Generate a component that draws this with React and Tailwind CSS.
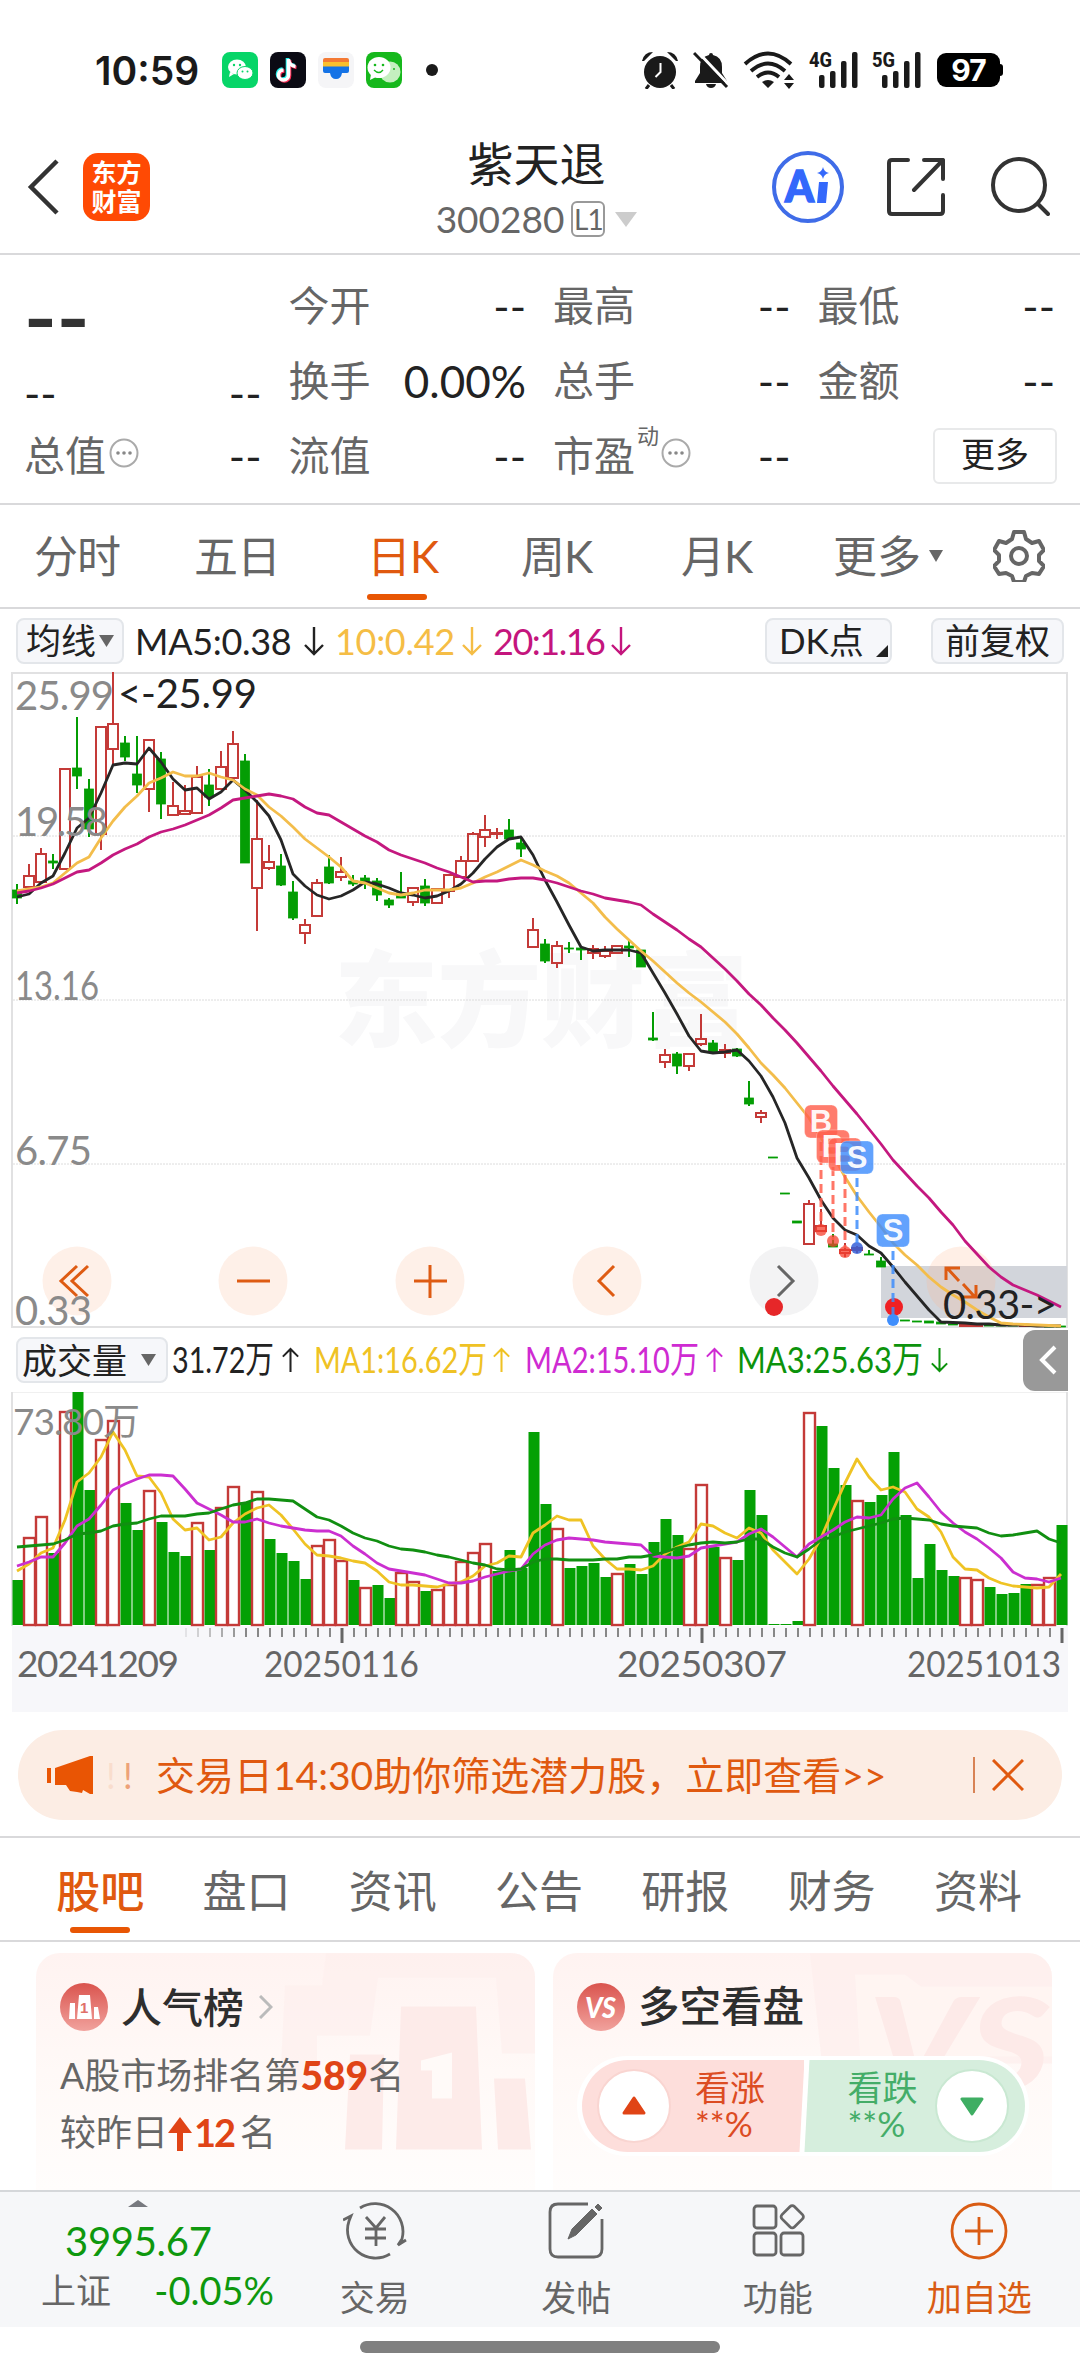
import clsx from 'clsx';

// [type, high, bodyTop, bodyBottom, low] in chart units, r = rise, g = fall
const candles = [
  ['g', 884, 890, 898, 904], ['r', 864, 876, 887, 887], ['r', 848, 854, 882, 882], ['g', 854, 861, 863, 869],
  ['r', 769, 769, 869, 869], ['g', 717, 768, 776, 789], ['g', 779, 789, 829, 837], ['r', 727, 727, 834, 850],
  ['r', 672, 724, 749, 765], ['g', 736, 743, 757, 761], ['g', 736, 774, 785, 793], ['r', 740, 740, 789, 812],
  ['g', 752, 759, 804, 819], ['r', 782, 806, 815, 815], ['r', 785, 811, 814, 814], ['r', 766, 777, 813, 813],
  ['g', 769, 785, 797, 806], ['r', 751, 767, 789, 789], ['r', 731, 744, 778, 778], ['g', 754, 761, 863, 863],
  ['r', 800, 839, 888, 931], ['r', 845, 862, 868, 870], ['g', 854, 866, 885, 886], ['g', 881, 892, 918, 920],
  ['r', 919, 925, 933, 944], ['r', 879, 883, 916, 916], ['g', 855, 867, 883, 884], ['r', 857, 872, 877, 881],
  ['g', 875, 881, 884, 886], ['g', 875, 878, 883, 889], ['g', 878, 881, 895, 901], ['g', 898, 900, 905, 908],
  ['g', 872, 893, 898, 898], ['r', 888, 888, 902, 906], ['g', 879, 886, 903, 906], ['r', 889, 889, 903, 903],
  ['r', 875, 875, 891, 898], ['r', 856, 861, 877, 877], ['r', 832, 834, 861, 861], ['r', 815, 830, 837, 847],
  ['r', 828, 833, 834, 839], ['g', 819, 830, 839, 839], ['g', 838, 843, 849, 857], ['r', 918, 930, 947, 947],
  ['g', 939, 944, 961, 963], ['r', 941, 946, 963, 968], ['g', 942, 948, 949, 953], ['g', 948, 948, 950, 960],
  ['r', 945, 949, 953, 959], ['r', 946, 951, 956, 958], ['r', 945, 946, 953, 953], ['g', 941, 946, 948, 957],
  ['g', 950, 950, 967, 967], ['g', 1012, 1038, 1040, 1041], ['r', 1049, 1055, 1062, 1068], ['g', 1052, 1054, 1066, 1074],
  ['r', 1054, 1054, 1066, 1071], ['r', 1014, 1039, 1044, 1046], ['g', 1040, 1043, 1052, 1052], ['r', 1044, 1050, 1053, 1058],
  ['g', 1048, 1049, 1056, 1057], ['g', 1081, 1098, 1104, 1106], ['r', 1110, 1113, 1117, 1123], ['g', 1157, 1157, 1158, 1158],
  ['g', 1193, 1193, 1194, 1194], ['g', 1221, 1221, 1223, 1223], ['r', 1200, 1204, 1244, 1244], ['r', 1209, 1226, 1231, 1231],
  ['g', 1234, 1244, 1247, 1247], ['r', 1243, 1250, 1253, 1257], ['r', 1246, 1248, 1250, 1253], ['g', 1250, 1254, 1255, 1255],
  ['g', 1257, 1261, 1267, 1267], ['g', 1319, 1319, 1320, 1320], ['g', 1320, 1320, 1321, 1321], ['g', 1321, 1321, 1322, 1322],
  ['g', 1321, 1321, 1323, 1323], ['g', 1322, 1322, 1324, 1324], ['g', 1324, 1324, 1325, 1325], ['r', 1324, 1324, 1326, 1326],
  ['r', 1325, 1325, 1326, 1326], ['g', 1325, 1325, 1326, 1326], ['g', 1325, 1325, 1326, 1326], ['g', 1325, 1325, 1326, 1326],
  ['r', 1325, 1325, 1326, 1326], ['r', 1325, 1325, 1326, 1326], ['g', 1326, 1326, 1327, 1327], ['g', 1326, 1326, 1327, 1327],
];

const ma5 = [
  897, 894, 883, 876, 853, 828, 818, 793, 765, 763, 764, 748, 762, 779, 790, 788, 799, 792, 780, 790, 802, 816,
  840, 874, 886, 895, 899, 896, 890, 882, 884, 888, 893, 895, 898, 896, 891, 884, 873, 859, 847, 839, 837, 855,
  880, 902, 925, 947, 951, 950, 950, 950, 953, 973, 993, 1014, 1036, 1051, 1053, 1052, 1050, 1061, 1076, 1097, 1123, 1158,
  1178, 1200, 1218, 1230, 1235, 1246, 1253, 1267, 1282, 1296, 1310, 1322, 1322.5, 1323, 1324, 1324, 1325, 1325, 1325, 1326, 1326, 1326,
];
const ma10 = [
  891, 889, 887, 883, 873, 863, 857, 838, 821, 807, 796, 783, 778, 772, 776, 776, 773, 777, 780, 789, 795, 807,
  816, 827, 839, 848, 857, 867, 881, 883, 888, 893, 895, 893, 890, 890, 890, 888, 883, 877, 872, 866, 860, 865,
  871, 876, 883, 893, 903, 917, 929, 940, 951, 961, 972, 983, 993, 1002, 1012, 1022, 1034, 1048, 1063, 1075, 1088, 1103,
  1118, 1138, 1155, 1177, 1196, 1212, 1227, 1243, 1255, 1265, 1277, 1287, 1295, 1302, 1310, 1317, 1323, 1324, 1324.5, 1325, 1325.5, 1326,
];
const ma20 = [
  893, 891, 888, 884, 878, 872, 870, 863, 855, 849, 844, 837, 832, 829, 825, 820, 815, 808, 800, 798, 796, 794,
  796, 799, 807, 813, 815, 822, 829, 836, 842, 850, 855, 859, 863, 868, 872, 877, 882, 881, 881, 879, 878, 878,
  880, 883, 887, 891, 894, 898, 900, 902, 905, 914, 922, 930, 939, 947, 958, 969, 981, 994, 1005, 1018, 1030, 1043,
  1057, 1071, 1086, 1100, 1114, 1129, 1144, 1160, 1173, 1186, 1198, 1212, 1225, 1241, 1254, 1267, 1277, 1285, 1290, 1295, 1301, 1307,
];

const volumes = [
  1580, 1537, 1516, 1553, 1411, 1391, 1490, 1439, 1420, 1503, 1530, 1490, 1522, 1552, 1556, 1522, 1550, 1507, 1486, 1502, 1491, 1539,
  1553, 1561, 1579, 1545, 1539, 1560, 1580, 1587, 1585, 1598, 1572, 1581, 1591, 1589, 1584, 1561, 1552, 1543, 1571, 1550, 1568, 1432,
  1504, 1528, 1568, 1566, 1563, 1577, 1573, 1564, 1574, 1542, 1519, 1535, 1548, 1484, 1547, 1557, 1560, 1490, 1515, 1624, 1624, 1621,
  1412, 1426, 1468, 1485, 1500, 1502, 1495, 1452, 1515, 1578, 1544, 1570, 1576, 1577, 1579, 1587, 1594, 1593, 1584, 1584, 1577, 1525,
];
const risingVolumes = [1, 2, 4, 7, 8, 11, 15, 17, 18, 20, 25, 26, 27, 29, 32, 33, 35, 36, 37, 38, 39, 45, 50, 56, 57, 59, 66, 70, 79, 80, 85, 86];

const vma1 = [
  1571, 1564, 1553, 1548, 1520, 1482, 1473, 1457, 1432, 1450, 1476, 1477, 1493, 1519, 1530, 1528, 1540, 1537, 1523, 1514, 1508, 1505,
  1515, 1529, 1544, 1555, 1556, 1558, 1561, 1563, 1571, 1582, 1585, 1585, 1586, 1587, 1584, 1582, 1576, 1566, 1563, 1556, 1557, 1533,
  1525, 1516, 1520, 1520, 1546, 1559, 1569, 1569, 1570, 1566, 1554, 1547, 1542, 1524, 1526, 1533, 1538, 1528, 1533, 1550, 1562, 1574,
  1559, 1538, 1510, 1483, 1459, 1477, 1490, 1487, 1492, 1509, 1517, 1532, 1557, 1569, 1570, 1578, 1583, 1586, 1587, 1588, 1587, 1574,
];
const vma2 = [
  1566, 1562, 1557, 1557, 1543, 1526, 1519, 1505, 1490, 1484, 1479, 1475, 1475, 1476, 1489, 1503, 1509, 1515, 1522, 1522, 1519, 1523,
  1526, 1528, 1530, 1531, 1531, 1536, 1546, 1554, 1563, 1569, 1571, 1573, 1575, 1579, 1583, 1583, 1581, 1577, 1574, 1571, 1569, 1554,
  1545, 1540, 1538, 1539, 1540, 1542, 1543, 1544, 1545, 1556, 1557, 1558, 1556, 1548, 1546, 1544, 1542, 1534, 1529, 1537, 1547, 1557,
  1544, 1537, 1530, 1522, 1517, 1518, 1515, 1499, 1488, 1483, 1497, 1512, 1523, 1532, 1539, 1548, 1558, 1572, 1578, 1579, 1582, 1578,
];
const vma3 = [
  1547, 1546, 1545, 1544, 1540, 1534, 1533, 1531, 1526, 1524, 1523, 1519, 1516, 1516, 1516, 1514, 1513, 1509, 1505, 1503, 1499, 1499,
  1500, 1501, 1509, 1517, 1520, 1526, 1533, 1538, 1541, 1546, 1549, 1550, 1552, 1555, 1557, 1560, 1563, 1565, 1569, 1570, 1569, 1562,
  1559, 1559, 1560, 1560, 1560, 1559, 1559, 1557, 1557, 1555, 1552, 1548, 1545, 1543, 1542, 1543, 1542, 1539, 1539, 1547, 1553, 1557,
  1549, 1540, 1537, 1532, 1529, 1526, 1523, 1519, 1518, 1519, 1520, 1524, 1526, 1527, 1528, 1533, 1536, 1535, 1533, 1531, 1539, 1543,
];

const xAt = (i) => 17 + i * 12;
const toPoints = (values) => values.map((y, i) => `${xAt(i)},${y}`).join(' ');

const signals = [
  { label: 'B', x: 821, y: 1105, end: 1226, color: '#ff5f4d' },
  { label: 'B', x: 833, y: 1130, end: 1240, color: '#ff5f4d' },
  { label: 'B', x: 845, y: 1138, end: 1248, color: '#ff5f4d' },
  { label: 'S', x: 857, y: 1141, end: 1246, color: '#3f8efc' },
  { label: 'S', x: 893, y: 1214, end: 1316, color: '#3f8efc' },
];

const Line = ({ values, color, width = 2.8 }) => (
  <polyline points={toPoints(values)} fill="none" stroke={color} strokeWidth={width} strokeLinejoin="round" />
);

const Down = ({ className }) => (
  <svg viewBox="0 0 14 12" className={className} fill="currentColor" preserveAspectRatio="none">
    <path d="M0 0h14L7 12z" />
  </svg>
);

const Arrow = ({ up, className }) => (
  <svg viewBox="0 0 20 30" className={clsx('h-[30px] w-5 shrink-0', up && 'rotate-180', className)} fill="none" stroke="currentColor" strokeWidth="2.4">
    <path d="M10 1v27M1 19l9 9 9-9" />
  </svg>
);

const StatusBar = () => (
  <div className="flex h-[140px] items-center pl-[95px] text-[#1a1a1a]">
    <div className="w-[127px] font-['Inter'] text-[39px] leading-none font-semibold">10:59</div>
    <svg viewBox="0 0 36 36" className="mr-3 size-9">
      <rect width="36" height="36" rx="8" fill="#07d568" />
      <ellipse cx="15" cy="15" rx="9" ry="7.5" fill="#fff" />
      <path d="M8 20l-1 5 5-3z" fill="#fff" />
      <ellipse cx="23" cy="21" rx="8" ry="6.5" fill="#fff" stroke="#07d568" />
      <g fill="#07d568"><circle cx="12" cy="13" r="1.2" /><circle cx="18" cy="13" r="1.2" /><circle cx="20.5" cy="19.5" r="1" /><circle cx="25.5" cy="19.5" r="1" /></g>
    </svg>
    <svg viewBox="0 0 36 36" className="mr-3 size-9" fill="none" strokeWidth="3.6">
      <rect width="36" height="36" rx="8" fill="#0b0b14" />
      <path d="M18.500 7v16a5 5 0 1 1-5-5M18.500 7c0 4 3 7 7 7.500" stroke="#25f4ee" transform="translate(-1 -1)" />
      <path d="M18.500 7v16a5 5 0 1 1-5-5M18.500 7c0 4 3 7 7 7.500" stroke="#fe2c55" transform="translate(1 1)" />
      <path d="M18.500 7v16a5 5 0 1 1-5-5M18.500 7c0 4 3 7 7 7.500" stroke="#fff" />
    </svg>
    <svg viewBox="0 0 36 36" className="mr-3 size-9">
      <rect width="36" height="36" rx="8" fill="#f5f5f7" />
      <path d="M5 8q0-2 2-2h22q2 0 2 2v3H5z" fill="#f47a35" />
      <path d="M5 10h26v5H5z" fill="#fbc02d" />
      <path d="M5 14.500h26V19q0 2-2 2h-5q-1 6-6 6t-6-6H7q-2 0-2-2z" fill="#1573e6" />
    </svg>
    <svg viewBox="0 0 36 36" className="size-9">
      <rect width="36" height="36" rx="8" fill="#16b81c" />
      <circle cx="24" cy="20" r="10.500" fill="#c4efbf" />
      <ellipse cx="13" cy="15.500" rx="11.500" ry="10.500" fill="#fff" />
      <path d="M5 22l-1 6 6-3z" fill="#fff" />
      <g fill="#16b81c"><circle cx="9" cy="13" r="1.300" /><circle cx="17" cy="13" r="1.300" /><circle cx="28" cy="17" r="1" /></g>
      <path d="M8 18q5 5 9 0" fill="none" stroke="#16b81c" strokeWidth="1.300" />
    </svg>
    <div className="ml-6 size-3 rounded-full bg-[#1a1a1a]" />

    <svg viewBox="0 0 38 38" className="ml-[203px] h-[38px] w-[38px]" fill="#1a1a1a">
      <circle cx="19" cy="21" r="16" />
      <path d="M1 10Q3 1 12 1L3 10zM37 10Q35 1 26 1l9 9z" />
      <path d="M8 34l-3 4M30 34l3 4" stroke="#1a1a1a" strokeWidth="3" />
      <path d="M19.500 12v9l-5 5" fill="none" stroke="#fff" strokeWidth="2" />
    </svg>
    <svg viewBox="0 0 36 38" className="ml-[14px] h-[38px] w-9" fill="#1a1a1a">
      <path d="M18 2q2 0 2 2 9 2 9 12v6l5 8v2H2v-2l5-8v-6Q7 6 16 4q0-2 2-2z" />
      <path d="M13 33h10q-1 4-5 4t-5-4z" />
      <path d="M4 0l33 35" stroke="#fff" strokeWidth="3" />
      <path d="M1 2l33 34" stroke="#1a1a1a" strokeWidth="3" />
    </svg>
    <svg viewBox="0 0 52 38" className="ml-[14px] h-[38px] w-[52px]" fill="none" stroke="#1a1a1a" strokeWidth="3.800">
      <path d="M2 13q23-21 46 0M8 20q17-15 34 0M14 26q11-9 22 0" />
      <path d="M19 31q6-4 12 0l-6 6zM41 29l5-6 5 6zM41 32l5 6 5-6z" fill="#1a1a1a" stroke="none" />
    </svg>
    {['4G', '5G'].map((net) => (
      <svg key={net} viewBox="0 0 49 38" className="ml-[14px] h-[38px] w-[49px] overflow-visible" fill="#1a1a1a">
        <text x="0" y="16" fontSize="21" fontWeight="800" fontFamily="Roboto" textLength="23" lengthAdjust="spacingAndGlyphs">{net}</text>
        <rect x="10" y="24" width="5.500" height="13" rx="2" />
        <rect x="21" y="20" width="5.500" height="17" rx="2" />
        <rect x="32" y="10" width="5.500" height="27" rx="2" />
        <rect x="43" y="1" width="5.500" height="36" rx="2" />
      </svg>
    ))}
    <div className="ml-4 flex h-[34px] w-[63px] items-center justify-center rounded-[9px] bg-black font-['Inter'] text-[30px] leading-none font-bold tracking-[-1px] text-white">97</div>
    <div className="h-3 w-[3px] rounded-r-sm bg-black" />
  </div>
);

const Header = () => (
  <header className="flex h-[115px] items-center border-b-2 border-[#d9d9db] pb-[19px] text-[#333]">
    <svg viewBox="0 0 32 56" className="ml-[27px] h-14 w-8" fill="none" stroke="currentColor" strokeWidth="4.500">
      <path d="M30 2L4 28l26 26" />
    </svg>
    <div className="ml-[24px] flex h-[68px] w-[67px] flex-col items-center justify-center rounded-[15px] bg-[#ff4a04] text-[25px] leading-[29px] font-bold text-white">
      <span>东方</span>
      <span>财富</span>
    </div>
    <div className="ml-[286px] flex w-[201px] flex-col items-center pt-[3px]">
      <div className="text-[46px] leading-[52px] text-[#222]">紫天退</div>
      <div className="mt-[9px] flex items-center text-[#666]">
        <span className="text-[37px] leading-[40px]">300280</span>
        <span className="ml-[7px] flex h-[36px] w-[34px] items-center justify-center rounded-[6px] border-2 border-[#999] text-[28px] leading-none tracking-[-1px]">L1</span>
        <Down className="ml-[10px] h-[15px] w-[22px] text-[#ccc]" />
      </div>
    </div>
    <svg viewBox="0 0 72 72" className="ml-[135px] size-[72px]">
      <circle cx="36" cy="36" r="34" fill="none" stroke="#3f6ce8" strokeWidth="4" />
      <text x="13" y="51" fontSize="43" fontWeight="900" fontFamily="Lato" fill="#3468fb" stroke="#3468fb" strokeWidth="1.500" textLength="29" lengthAdjust="spacingAndGlyphs">A</text>
      <path d="M47 31h9l-2 21h-9zM51 16q1 5 6 6-5 1-6 6-1-5-6-6 5-1 6-6z" fill="#3468fb" />
    </svg>
    <svg viewBox="0 0 58 58" className="ml-[43px] size-[58px]" fill="none" stroke="currentColor" strokeWidth="4" strokeLinecap="round" strokeLinejoin="round">
      <path d="M21 2H5q-3 0-3 3v48q0 3 3 3h48q3 0 3-3V37M37 2h19v19M56 2L27 32" />
    </svg>
    <svg viewBox="0 0 60 60" className="ml-[45px] size-[60px]" fill="none" stroke="currentColor" strokeWidth="4" strokeLinecap="round">
      <circle cx="29" cy="28" r="26" />
      <path d="M48 47l10 10" />
    </svg>
  </header>
);

const Info = () => (
  <svg viewBox="0 0 30 30" className="mb-[6px] ml-[3px] size-[30px]" fill="none" stroke="#aaa" strokeWidth="2">
    <circle cx="15" cy="15" r="13.500" />
    <g fill="#888" stroke="none"><circle cx="9" cy="15" r="1.800" /><circle cx="15" cy="15" r="1.800" /><circle cx="21" cy="15" r="1.800" /></g>
  </svg>
);

const Quote = ({ label, value = '--', extra }) => (
  <div className="flex items-center justify-between leading-none">
    <span className="flex items-center text-[41px] text-[#666]">{label}{extra}</span>
    <span className="text-[44px] text-[#222]">{value}</span>
  </div>
);

const Quotes = () => (
  <section className="grid h-[250px] grid-cols-4 grid-rows-[75px_75px_75px] gap-x-[27px] border-b-2 border-[#d9d9db] pt-[13px] pr-[25px] pl-[24px]">
    <div className="flex items-center pt-[22px]">
      <span className="origin-left scale-x-[1.22] text-[72px] leading-none font-black text-[#333]">--</span>
    </div>
    <Quote label="今开" />
    <Quote label="最高" />
    <Quote label="最低" />
    <div className="flex items-center justify-between pt-6 text-[44px] leading-none text-[#222]">
      <span>--</span>
      <span>--</span>
    </div>
    <Quote label="换手" value="0.00%" />
    <Quote label="总手" />
    <Quote label="金额" />
    <Quote label="总值" extra={<Info />} />
    <Quote label="流值" />
    <Quote label="市盈" extra={<><span className="mb-10 -mr-px ml-[2px] text-[22px]">动</span><Info /></>} />
    <div className="flex items-center justify-end">
      <button className="-mr-[2px] h-[56px] w-[124px] rounded-md border-2 border-[#e8e9ea] pb-1 text-[34px] leading-none text-[#222]">更多</button>
    </div>
  </section>
);

const periods = [
  { label: '分时', cls: 'w-[160px] pl-[34px]' },
  { label: '五日', cls: 'w-[207px] pl-[34px]' },
  { label: '日K', cls: 'w-[154px] text-[#e0590f]', active: true },
  { label: '周K', cls: 'w-[160px]' },
  { label: '月K', cls: 'w-[152px]' },
];

const PeriodTabs = () => (
  <nav className="flex h-[104px] items-center border-b-2 border-[#d9d9db] text-[44px] leading-none text-[#666]">
    {periods.map((p) => (
      <div key={p.label} className={clsx('relative flex h-full items-center tracking-[-1px]', p.cls)}>
        {p.label}
        {p.active && <span className="absolute bottom-[7px] left-0 h-[6px] w-[60px] rounded-full bg-[#e85604]" />}
      </div>
    ))}
    <div>更多</div>
    <Down className="ml-2 h-3 w-[14px]" />
    <svg viewBox="0 0 52 52" className="ml-[50px] size-[52px]" fill="none" stroke="currentColor" strokeWidth="4" strokeLinejoin="round">
      <path d="M21 2h10l2 7 6 4 7-2 5 9-5 5v6l5 5-5 8-7-1-6 3-2 6H21l-2-6-6-3-7 1-5-8 5-5v-6l-5-5 5-9 7 2 6-4z" />
      <circle cx="26" cy="26" r="8" />
    </svg>
  </nav>
);

const pill = 'flex items-center rounded-lg border-2 border-[#e3e6ea] bg-[#f6f7fa] text-[35px] leading-none text-[#222]';

const MaLegend = () => (
  <div className="flex h-[63px] items-center text-[36px] leading-none text-[#222]">
    <div className={clsx(pill, 'ml-4 h-[46px] w-[108px] pl-[8px]')}>均线<Down className="ml-[3px] h-3 w-[15px] text-[#666]" /></div>
    <span className="ml-[11px] w-[169px] tracking-[-0.3px]">MA5:0.38</span>
    <Arrow />
    <span className="ml-[11px] w-[127px] tracking-[-0.3px] text-[#f5bd45]">10:0.42</span>
    <Arrow className="text-[#f5bd45]" />
    <span className="ml-[11px] w-[118px] tracking-[-1.5px] text-[#c4157d]">20:1.16</span>
    <Arrow className="text-[#c4157d]" />
    <div className={clsx(pill, 'ml-auto h-[46px] w-[127px] pl-3')}>
      DK点
      <svg viewBox="0 0 12 12" className="mt-5 ml-3 size-3"><path d="M12 0v12H0z" fill="#222" /></svg>
    </div>
    <div className={clsx(pill, 'mr-4 ml-[39px] h-[46px] w-[133px] justify-center')}>前复权</div>
  </div>
);

const ControlIcon = ({ x, d, color = '#de5b12', bg = '#feede4' }) => (
  <g>
    <circle cx={x} cy="1281" r="34.500" fill={bg} fillOpacity="0.85" />
    <path d={d} transform={`translate(${x} 1281)`} fill="none" stroke={color} strokeWidth="3" />
  </g>
);

const Candle = ({ data, i }) => {
  const [type, high, top, bottom, low] = data;
  const x = xAt(i);
  const color = type === 'r' ? '#c43a38' : '#049d04';
  const height = Math.max(bottom - top, 1);
  return (
    <g stroke={color} strokeWidth="2">
      <path d={`M${x} ${high}V${top}M${x} ${bottom}V${low}`} />
      {type === 'r'
        ? <rect x={x - 5} y={top} width="10" height={height} fill="none" />
        : <rect x={x - 4.5} y={top} width="9" height={height} fill={color} strokeWidth="0.800" />}
    </g>
  );
};

const PriceChart = () => (
  <svg viewBox="0 672 1080 656" className="block h-[656px] w-[1080px]">
    <text x="334" y="1039" fontSize="104" fontWeight="900" fill="#f8f8f9" textLength="414">东方财富</text>
    <rect x="12" y="673" width="1055" height="654" fill="none" stroke="#e1e1e2" strokeWidth="2" />
    {[836, 1000, 1164].map((y) => (
      <path key={y} d={`M13 ${y}H1066`} stroke="#dcdcdc" strokeWidth="1" strokeDasharray="2 1" />
    ))}
    <rect x="881" y="1266" width="186" height="52" fill="#d2d5db" />

    <ControlIcon x={77} d="M0-15L-16 0 0 15M11-15L-5 0 11 15" />
    <ControlIcon x={253} d="M-16 0H17" />
    <ControlIcon x={430} d="M-16 0H17M0-16V17" />
    <ControlIcon x={607} d="M7-15L-8 0 7 15" />
    <ControlIcon x={784} d="M-6-15L9 0-6 15" color="#666" bg="#f1f1f2" />
    <circle cx="961" cy="1281" r="34.500" fill="#ffb58d" fillOpacity="0.220" />
    <path d="M946 1280v-12h14M948 1269l11 12M976 1285v12h-14M974 1296l-11-12" fill="none" stroke="#de5b12" strokeWidth="3" />

    {candles.map((data, i) => <Candle key={i} data={data} i={i} />)}
    <Line values={ma5} color="#262626" />
    <Line values={ma10} color="#f3bd4b" />
    <Line values={ma20} color="#c4187f" />

    <circle cx="774" cy="1307" r="9" fill="#e62729" />
    <circle cx="894" cy="1307" r="9" fill="#f02024" />
    <g fill="#f5402f" fillOpacity="0.750">
      <circle cx="821" cy="1230" r="6" />
      <circle cx="833" cy="1241" r="6" />
      <circle cx="845" cy="1252" r="6" />
    </g>
    <circle cx="857" cy="1248" r="6" fill="#3560d8" fillOpacity="0.850" />
    <circle cx="893" cy="1320" r="6" fill="#3f8efc" />
    {signals.map((s) => (
      <g key={s.x}>
        <path d={`M${s.x} ${s.y + 37}V${s.end}`} stroke={s.color} strokeWidth="3" strokeDasharray="9 5" opacity="0.850" />
        <rect x={s.x - 16.5} y={s.y} width="33" height="33" rx="6" fill={s.color} fillOpacity="0.820" stroke="#fff" strokeOpacity="0.300" />
        <text x={s.x} y={s.y + 27} textAnchor="middle" fontSize="31" fontWeight="700" fontFamily="Liberation Sans" fill="#fff" fillOpacity="0.950">{s.label}</text>
      </g>
    ))}

    <g fontSize="40" fill="#8a8a8a">
      <text x="15" y="710" textLength="99">25.99</text>
      <text x="15" y="836" textLength="93">19.58</text>
      <text x="15" y="1000" textLength="84" lengthAdjust="spacingAndGlyphs">13.16</text>
      <text x="15" y="1165" textLength="77">6.75</text>
      <text x="15" y="1325" textLength="77">0.33</text>
    </g>
    <g fontSize="40" fill="#222">
      <text x="118" y="708" textLength="139">&lt;-25.99</text>
      <text x="943" y="1319" textLength="114">0.33-&gt;</text>
    </g>
  </svg>
);

const volumeLegend = [
  { text: '31.72万', box: 'w-[110px]', length: 102, up: true, cls: 'mr-[15px] text-[#222]' },
  { text: 'MA1:16.62万', box: 'w-[179px]', length: 173, up: true, cls: 'mr-[15px] text-[#efc224]' },
  { text: 'MA2:15.10万', box: 'w-[181px]', length: 174, up: true, cls: 'mr-[14px] text-[#cf2bd2]' },
  { text: 'MA3:25.63万', box: 'w-[194px]', length: 186, up: false, cls: 'text-[#0c930c]' },
];

const VolumeLegend = () => (
  <div className="flex h-[64px] items-center text-[36px] leading-none">
    <div className={clsx(pill, 'ml-4 h-[46px] w-[152px] shrink-0 pl-[4px]')}>成交量<Down className="ml-[14px] h-3 w-[15px] text-[#666]" /></div>
    <div className="ml-[4px] flex items-center">
      {volumeLegend.map((item) => (
        <div key={item.text} className={clsx('flex items-center', item.cls)}>
          <svg className={clsx('h-[46px] shrink-0 overflow-visible', item.box)}>
            <text x="0" y="36" fontSize="37" fill="currentColor" textLength={item.length} lengthAdjust="spacingAndGlyphs">{item.text}</text>
          </svg>
          <Arrow up={item.up} className="w-[17px]" />
        </div>
      ))}
    </div>
    <div className="mr-3 ml-auto flex h-[61px] w-[45px] shrink-0 items-center justify-center rounded-l-xl bg-[#999]">
      <svg viewBox="0 0 18 30" className="ml-1 h-[30px] w-[18px]" fill="none" stroke="#fff" strokeWidth="4"><path d="M16 2L3 15l13 13" /></svg>
    </div>
  </div>
);

const VolumeChart = () => (
  <svg viewBox="0 1392 1080 320" className="block h-[320px] w-[1080px]">
    <path d="M12 1626V1391H1067V1626" fill="none" stroke="#e1e1e2" strokeWidth="2" />
    <path d="M12 1392H1068" stroke="#e1e1e2" />
    <rect x="12" y="1626" width="1056" height="86" fill="#f7f7fa" />
    {volumes.map((top, i) => {
      const x = xAt(i);
      return risingVolumes.includes(i)
        ? <rect key={i} x={x - 5} y={top + 1} width="11" height={1624 - top} fill="#fff" stroke="#c43a38" strokeWidth="2.400" />
        : <rect key={i} x={x - 4.5} y={top} width="11" height={1625 - top} fill="#04a004" />;
    })}
    <Line values={vma1} color="#efc324" />
    <Line values={vma2} color="#cb2fd0" />
    <Line values={vma3} color="#118f11" />
    {Array.from({ length: 74 }, (_, n) => {
      const x = 186 + n * 12;
      const major = [13, 43, 73].includes(n);
      return (
        <path
          key={n}
          d={`M${x} 1628v${major ? 15 : 9}`}
          stroke={major ? '#666' : '#888'}
          strokeWidth={major ? 3 : 2}
          opacity={Math.min(1, (n + 1) / 6)}
        />
      );
    })}
    <text x="13" y="1435" fontSize="37" fill="#8a8a8a" textLength="127">73.80万</text>
    <g fontSize="37" fill="#666">
      <text x="17" y="1677" textLength="162">20241209</text>
      <text x="264" y="1677" textLength="155" lengthAdjust="spacingAndGlyphs">20250116</text>
      <text x="617" y="1677" textLength="170">20250307</text>
      <text x="907" y="1677" textLength="154" lengthAdjust="spacingAndGlyphs">20251013</text>
    </g>
  </svg>
);

const Banner = () => (
  <div className="mx-[18px] mt-[18px] flex h-[90px] items-center rounded-full bg-[#fcede4] text-[#e0590f]">
    <svg viewBox="0 0 46 40" className="ml-[29px] h-10 w-[46px]" fill="#e95504">
      <path d="M0 13h4v15H0zM8 13L43 1h3v38h-3l-7-4-1 3-5-1-7-1-4-6H8z" />
    </svg>
    <span className="ml-[13px] w-[4px] text-[36px] leading-none opacity-10">!</span>
    <span className="ml-[13px] w-[33px] text-[36px] leading-none opacity-50">!</span>
    <span className="text-[39px] leading-none whitespace-nowrap">交易日14:30助你筛选潜力股，立即查看&gt;&gt;</span>
    <span className="mr-[17px] ml-auto h-9 w-[2px] bg-[#d88355]" />
    <svg viewBox="0 0 32 32" className="mr-[38px] size-8" fill="none" stroke="currentColor" strokeWidth="3"><path d="M1 1l30 30M31 1L1 31" /></svg>
  </div>
);

const sections = ['股吧', '盘口', '资讯', '公告', '研报', '财务', '资料'];

const SectionTabs = () => (
  <nav className="mt-[16px] flex h-[106px] border-y-2 border-[#d9d9db] pl-[27px] text-[44px] leading-none text-[#666]">
    {sections.map((label, i) => (
      <div key={label} className={clsx('relative flex w-[146.3px] items-center justify-center pt-[3px]', i === 0 && 'font-medium text-[#e0590f]')}>
        {label}
        {i === 0 && <span className="absolute bottom-[7px] h-[6px] w-[60px] rounded-full bg-[#e85604]" />}
      </div>
    ))}
  </nav>
);

const Badge = ({ children }) => (
  <svg viewBox="0 0 48 48" className="size-12">
    <defs>
      <linearGradient id="badge" x1="0" y1="0" x2="0" y2="1"><stop stopColor="#da544e" /><stop offset="1" stopColor="#f1a29d" /></linearGradient>
    </defs>
    <circle cx="24" cy="24" r="24" fill="url(#badge)" />
    {children}
  </svg>
);

const card = 'relative h-[237px] w-[499px] overflow-hidden rounded-t-[24px] bg-linear-to-b from-[#fff3f1] via-[#fff9f7] to-[#fffdfc]';

const PopularityCard = () => (
  <div className={clsx(card, 'ml-9')}>
    <svg viewBox="36 1954 499 236" className="absolute inset-0 h-full w-full">
      <path d="M326 1954h209v100h-33l-6-76H378l-8 58h-53v50h-37l5-100h37z" fill="#fdeeec" opacity="0.600" />
      <path d="M350 2055h34l-2 95h-37zM401 2007h75l6 143H396zM494 2079h31l6 71h-33z" fill="#fdebe9" />
      <path d="M421 2061l31-8v46h-20v-28h-11z" fill="#fffaf8" />
    </svg>
    <div className="relative flex flex-col pt-[28px] pl-6 text-[36px] leading-none text-[#666]">
      <div className="flex h-[52px] items-center">
        <Badge>
          <path d="M10 20h5v16H9zM19 12h11l2 24H17zM34 24h4l2 12h-6z" fill="#fff" />
          <text x="20" y="30" fontSize="15" fontWeight="700" fontFamily="Liberation Sans" fill="#e0706a">1</text>
        </Badge>
        <span className="ml-[13px] text-[41px] font-medium text-[#2e2e2e]">人气榜</span>
        <svg viewBox="0 0 14 24" className="ml-[15px] h-6 w-[14px]" fill="none" stroke="#bbb" strokeWidth="3"><path d="M1 1l11 11L1 23" /></svg>
      </div>
      <div className="mt-[24px] flex h-9 items-center whitespace-nowrap">A股市场排名第<b className="text-[39px] font-black text-[#e04416]">589</b>名</div>
      <div className="mt-[21px] flex h-9 items-center whitespace-nowrap">
        较昨日
        <svg viewBox="0 0 24 34" className="mt-1 h-[34px] w-6" fill="#e04416"><path d="M12 0l12 16H15v18H9V16H0z" /></svg>
        <b className="ml-[2px] text-[38px] tracking-[-2px] text-[#e04416]">12</b>
        <span className="ml-[6px]">名</span>
      </div>
    </div>
  </div>
);

const SentimentCard = () => (
  <div className={clsx(card, 'ml-[18px]')}>
    <svg viewBox="553 1954 499 236" className="absolute inset-0 h-full w-full">
      <path d="M810 1954h242v110H822z" fill="#fdeeec" opacity="0.700" />
      <path d="M855 1975h50l16 12h131v70H860z" fill="#fff6f4" opacity="0.700" />
      <text x="868" y="2090" fontSize="128" fontWeight="900" fontFamily="Lato" fontStyle="italic" fill="#fdeae8" textLength="182" lengthAdjust="spacingAndGlyphs">VS</text>
    </svg>
    <div className="relative flex flex-col pt-[28px] pl-6">
      <div className="flex h-[52px] items-center">
        <Badge>
          <text x="8" y="35" fontSize="28" fontWeight="900" fontStyle="italic" fontFamily="Lato" fill="#fff" textLength="31" lengthAdjust="spacingAndGlyphs">VS</text>
        </Badge>
        <span className="ml-[13px] text-[41.5px] leading-none font-medium text-[#2e2e2e]">多空看盘</span>
      </div>
      <div className="mt-[23px] flex h-[100px] w-[452px] items-center rounded-full bg-white p-1 pl-[5px] text-[35px] leading-[36px]">
        <div className="flex h-[92px] w-[223px] items-center rounded-l-full bg-[#fddedb] pl-[15px] text-[#dc4c23] [clip-path:polygon(0_0,100%_0,calc(100%-5px)_100%,0_100%)]">
          <div className="flex size-[74px] items-center justify-center rounded-full border-2 border-[#f9d5d1] bg-white">
            <svg viewBox="0 0 24 20" className="size-6" fill="#e04416" stroke="#e04416" strokeWidth="3" strokeLinejoin="round"><path d="M12 2l10 15H2z" /></svg>
          </div>
          <div className="-mt-[3px] ml-6">看涨<br />**%</div>
        </div>
        <div className="flex h-[92px] w-[221px] items-center rounded-r-full bg-[#d6eedd] pl-[43px] text-[#44ad68] [clip-path:polygon(5px_0,100%_0,100%_100%,0_100%)]">
          <div className="-mt-[3px]">看跌<br />**%</div>
          <div className="ml-[18px] flex size-[74px] shrink-0 items-center justify-center rounded-full border-2 border-[#c9e8d2] bg-white">
            <svg viewBox="0 0 24 20" className="size-6" fill="#3fae63" stroke="#3fae63" strokeWidth="3" strokeLinejoin="round"><path d="M12 18L2 3h20z" /></svg>
          </div>
        </div>
      </div>
    </div>
  </div>
);

const Action = ({ label, className, children }) => (
  <div className={clsx('flex w-[201.500px] flex-col items-center pt-[7px] text-[35px] leading-none', className)}>
    <svg viewBox="0 0 64 64" className="size-16" fill="none" stroke="currentColor" strokeWidth="2.800">{children}</svg>
    <span className="mt-[17px]">{label}</span>
  </div>
);

const BottomBar = () => (
  <footer className="flex h-[137px] border-t-2 border-[#d5d7da] bg-[#f6f7f9] text-[#666]">
    <div className="flex w-[274px] flex-col pt-[8px] leading-none">
      <svg viewBox="0 0 20 7" className="ml-[128px] h-[7px] w-5" fill="#77797f"><path d="M10 0l10 7H0z" /></svg>
      <span className="mt-[14px] ml-[65px] text-[40px] tracking-[-0.3px] text-[#0e980e]">3995.67</span>
      <div className="mt-[10px] ml-[41px] flex items-center justify-between text-[35px]">
        <span>上证</span>
        <span className="text-[38px] text-[#0e980e]">-0.05%</span>
      </div>
    </div>
    <Action label="交易">
      <path d="M17 9a28 28 0 0 1 42 31l-4 6 8-5M47 55A28 28 0 0 1 6 22l2-5-8 4" />
      <path d="M23 18l10 11 9-11M33 29v18M22 30h21M22 39h21" />
    </Action>
    <Action label="发帖">
      <path d="M44 5H14q-8 0-8 8v37q0 8 8 8h36q8 0 8-8V20" />
      <path d="M24 40l4-10L48 10l5 5-21 21zM51 8l3-3 4 4-3 3z" fill="currentColor" strokeWidth="1" />
    </Action>
    <Action label="功能">
      <rect x="8" y="7" width="22" height="22" rx="3" />
      <rect x="8" y="34" width="22" height="22" rx="3" />
      <rect x="35" y="34" width="22" height="22" rx="3" />
      <rect x="37.500" y="9" width="17.500" height="17.500" rx="3" transform="rotate(45 46.250 17.750)" />
    </Action>
    <Action label="加自选" className="text-[#d95c14]">
      <circle cx="32" cy="32" r="27" />
      <path d="M18 32h28M32 18v28" />
    </Action>
  </footer>
);

export default function App() {
  return (
    <div className="h-[2374px] w-[1080px] overflow-hidden bg-white font-['Lato','Noto_Sans_CJK_SC',sans-serif]">
      <StatusBar />
      <Header />
      <Quotes />
      <PeriodTabs />
      <MaLegend />
      <PriceChart />
      <VolumeLegend />
      <VolumeChart />
      <Banner />
      <SectionTabs />
      <div className="flex pt-[11px]">
        <PopularityCard />
        <SentimentCard />
      </div>
      <BottomBar />
      <div className="mx-auto mt-[14px] h-3 w-[360px] rounded-full bg-[#808080]" />
    </div>
  );
}
